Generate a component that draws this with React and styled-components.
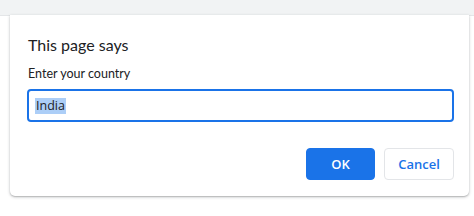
import styled, { createGlobalStyle } from 'styled-components'

const GlobalStyle = createGlobalStyle`
	html, body {
		margin: 0;
		padding: 0;
		background: #ffffff;
		font-family: "Open Sans", "Noto Sans", sans-serif;
	}
`

const Page = styled.div`
	width: 474px;
	height: 216px;
	display: flex;
	flex-direction: column;
	overflow: hidden;
`

const TopBar = styled.div`
	height: 15px;
	flex-shrink: 0;
	background: #f1f3f4;
	border-bottom: 1px solid #e4e6e8;
`

const Stage = styled.div`
	padding: 0 5px 0 10px;
	margin-top: -1px;
`

const Dialog = styled.div`
	width: 459px;
	box-sizing: border-box;
	background: #ffffff;
	border-radius: 0 0 5px 5px;
	box-shadow: 0 1px 3px rgba(60, 64, 67, 0.35), 0 1px 1px rgba(60, 64, 67, 0.15);
	padding: 19px 15px 16px 17px;
	display: flex;
	flex-direction: column;
`

const Title = styled.h2`
	margin: 0 0 0 1px;
	font-family: Lato, "Open Sans", sans-serif;
	font-size: 16px;
	font-weight: 400;
	line-height: 22px;
	color: #202124;
`

const Label = styled.label`
	margin: 9px 0 0 1px;
	font-family: Lato, "Open Sans", sans-serif;
	font-size: 12.5px;
	line-height: 18px;
	color: #202124;
`

const Field = styled.div`
	margin-top: 6px;
	height: 33px;
	box-sizing: border-box;
	border: 2px solid #1a73e8;
	border-radius: 4px;
	display: flex;
	align-items: center;
	padding: 0 6px;
`

const Selected = styled.span`
	background: #accef7;
	color: #202124;
	font-size: 12.5px;
	line-height: 16px;
	padding: 0 1px;
`

const Actions = styled.div`
	margin-top: 26px;
	display: flex;
	justify-content: flex-end;
	gap: 9px;
`

const Button = styled.button`
	width: ${p => p.$w}px;
	height: 32px;
	border-radius: 4px;
	font-family: inherit;
	font-size: 13px;
	font-weight: 600;
	cursor: pointer;
	border: 1px solid ${p => (p.$primary ? '#1a73e8' : '#e3e5e8')};
	background: ${p => (p.$primary ? '#1a73e8' : '#ffffff')};
	color: ${p => (p.$primary ? '#ffffff' : '#1a73e8')};
`

export default function App() {
	return (
		<>
			<GlobalStyle />
			<Page>
				<TopBar />
				<Stage>
					<Dialog>
						<Title>This page says</Title>
						<Label>Enter your country</Label>
						<Field>
							<Selected>India</Selected>
						</Field>
						<Actions>
							<Button $primary $w={69}>OK</Button>
							<Button $w={70}>Cancel</Button>
						</Actions>
					</Dialog>
				</Stage>
			</Page>
		</>
	)
}
